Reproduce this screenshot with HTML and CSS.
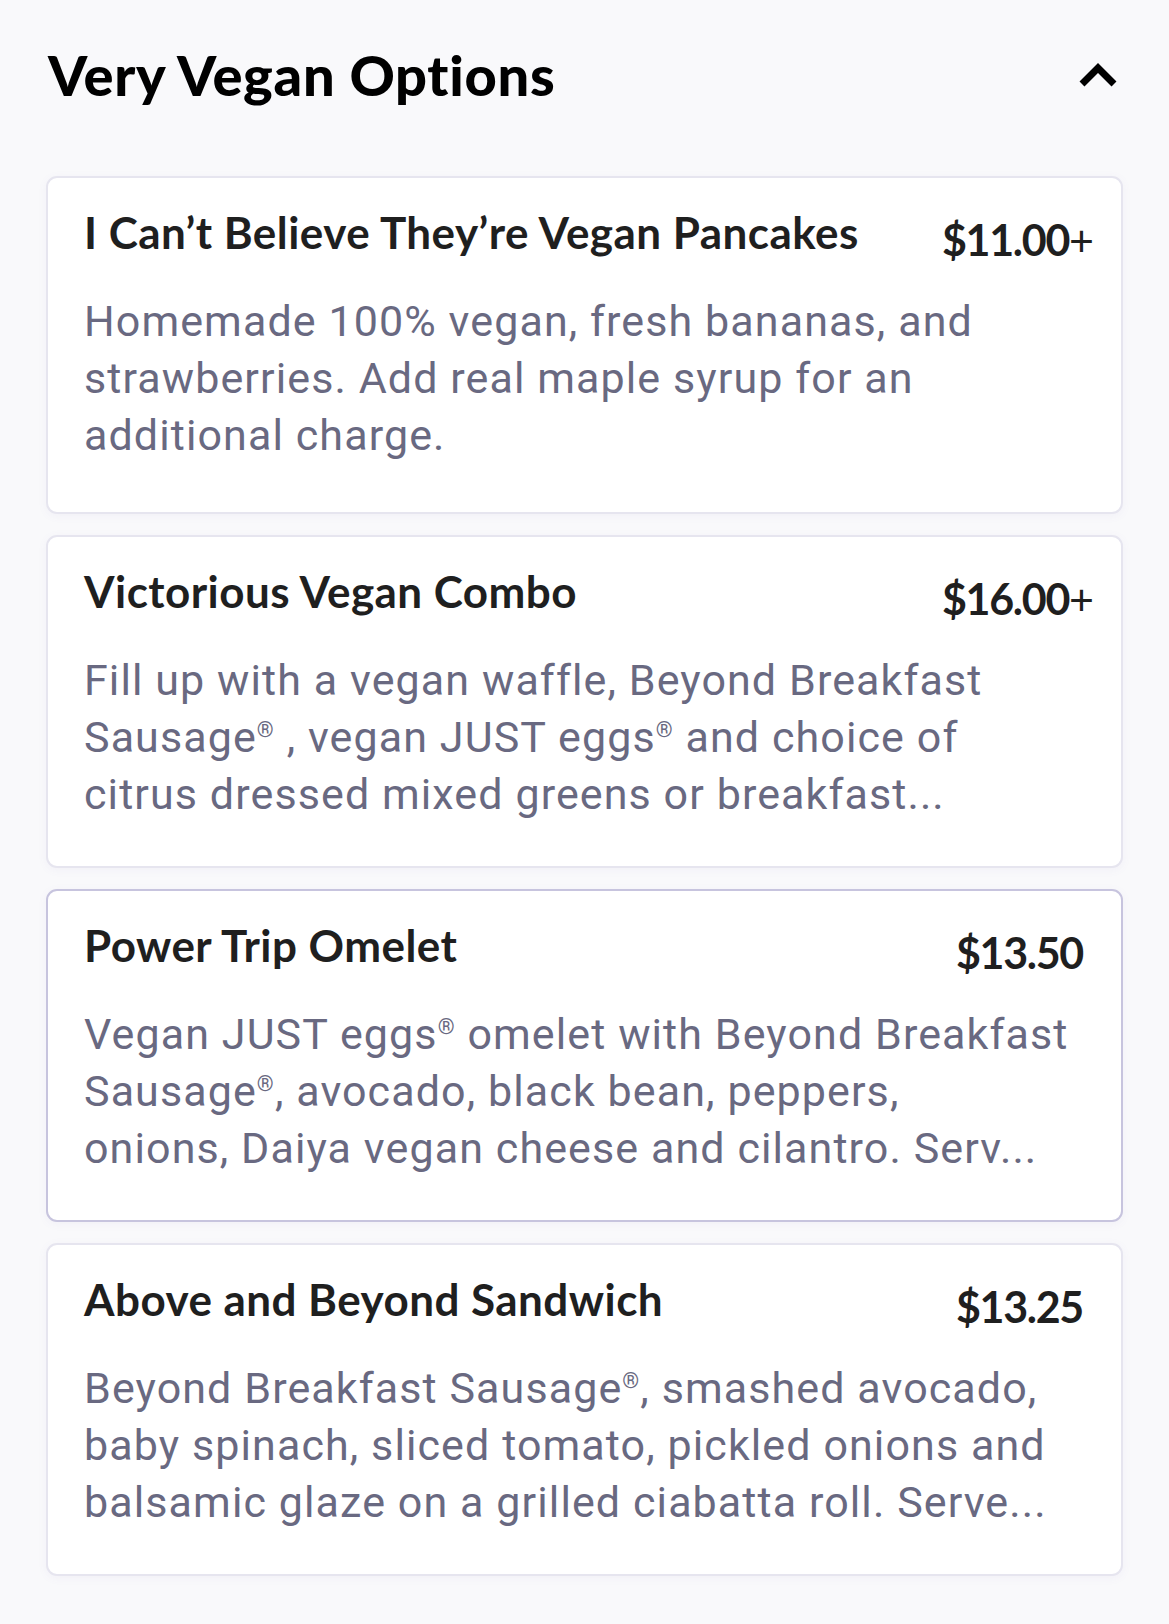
FILE: index.html
```html
<!DOCTYPE html>
<html lang="en">
<head>
<meta charset="utf-8">
<title>Very Vegan Options</title>
<link rel="stylesheet" href="styles.css">
</head>
<body>
<main class="section">
  <header class="section-head">
    <h1 class="section-title">Very Vegan Options</h1>
    <button class="toggle" aria-label="Collapse">
      <svg width="40" height="26" viewBox="0 0 40 26"><polyline points="4,22 20,6 36,22" fill="none" stroke="#000" stroke-width="7" stroke-linejoin="miter"/></svg>
    </button>
  </header>

  <ul class="items">
    <li class="card">
      <div class="card-head">
        <h2 class="item-name">I Can’t Believe They’re Vegan Pancakes</h2>
        <span class="price">$11.00<span class="plus">+</span></span>
      </div>
      <p class="desc">Homemade 100% vegan, fresh bananas, and<br>strawberries. Add real maple syrup for an<br>additional charge.</p>
    </li>
    <li class="card">
      <div class="card-head">
        <h2 class="item-name">Victorious Vegan Combo</h2>
        <span class="price">$16.00<span class="plus">+</span></span>
      </div>
      <p class="desc">Fill up with a vegan waffle, Beyond Breakfast<br>Sausage<sup>®</sup> , vegan JUST eggs<sup>®</sup> and choice of<br>citrus dressed mixed greens or breakfast...</p>
    </li>
    <li class="card card-active">
      <div class="card-head">
        <h2 class="item-name">Power Trip Omelet</h2>
        <span class="price">$13.50</span>
      </div>
      <p class="desc">Vegan JUST eggs<sup>®</sup> omelet with Beyond Breakfast<br>Sausage<sup>®</sup>, avocado, black bean, peppers,<br>onions, Daiya vegan cheese and cilantro. Serv...</p>
    </li>
    <li class="card">
      <div class="card-head">
        <h2 class="item-name">Above and Beyond Sandwich</h2>
        <span class="price">$13.25</span>
      </div>
      <p class="desc">Beyond Breakfast Sausage<sup>®</sup>, smashed avocado,<br>baby spinach, sliced tomato, pickled onions and<br>balsamic glaze on a grilled ciabatta roll. Serve...</p>
    </li>
  </ul>
</main>
</body>
</html>
```

FILE: styles.css
```css
html, body {
  margin: 0;
  padding: 0;
  background: #f9f9fb;
}

body {
  font-family: "Lato", "Noto Sans", sans-serif;
  color: #212121;
}

.section {
  padding: 41px 46px 40px 46px;
}

.section-head {
  display: flex;
  align-items: center;
  justify-content: space-between;
  margin-bottom: 68px;
}

.section-title {
  margin: 0 0 0 2px;
  font-family: "Lato", sans-serif;
  font-weight: 900;
  font-size: 56px;
  line-height: 67px;
  color: #000;
  letter-spacing: 0.7px;
}

.toggle {
  border: 0;
  background: none;
  padding: 0;
  margin-right: 5px;
  display: flex;
}

.items {
  list-style: none;
  margin: 0;
  padding: 0;
  display: flex;
  flex-direction: column;
  gap: 21px;
}

.card {
  background: #fff;
  border: 2px solid #e6e5ef;
  border-radius: 11px;
  box-shadow: 0 2px 10px rgba(120, 110, 190, 0.06);
  padding: 28px 38px 43px 36px;
}

.card:first-child {
  padding-bottom: 48px;
}

.card-active {
  border-color: #c7c4de;
}

.card-head {
  display: flex;
  justify-content: space-between;
  align-items: flex-start;
}

.item-name {
  margin: 0;
  font-family: "Lato", sans-serif;
  font-weight: 700;
  font-size: 44px;
  line-height: 52px;
  color: #1f1f1f;
  letter-spacing: 0.45px;
}

.price {
  font-family: "Lato", sans-serif;
  font-weight: 700;
  font-size: 43px;
  line-height: 36px;
  padding-top: 16px;
  color: #1f1f1f;
  letter-spacing: -1.3px;
  white-space: nowrap;
}

.plus {
  font-weight: 400;
  letter-spacing: 0;
  margin-right: -11px;
}

.desc {
  margin: 35px 0 0 0;
  font-family: "Roboto", sans-serif;
  font-weight: 400;
  font-size: 43px;
  line-height: 57px;
  letter-spacing: 1.1px;
  color: #696981;
}

.desc sup {
  font-size: 0.5em;
  vertical-align: 0.7em;
  line-height: 0;
}
```
